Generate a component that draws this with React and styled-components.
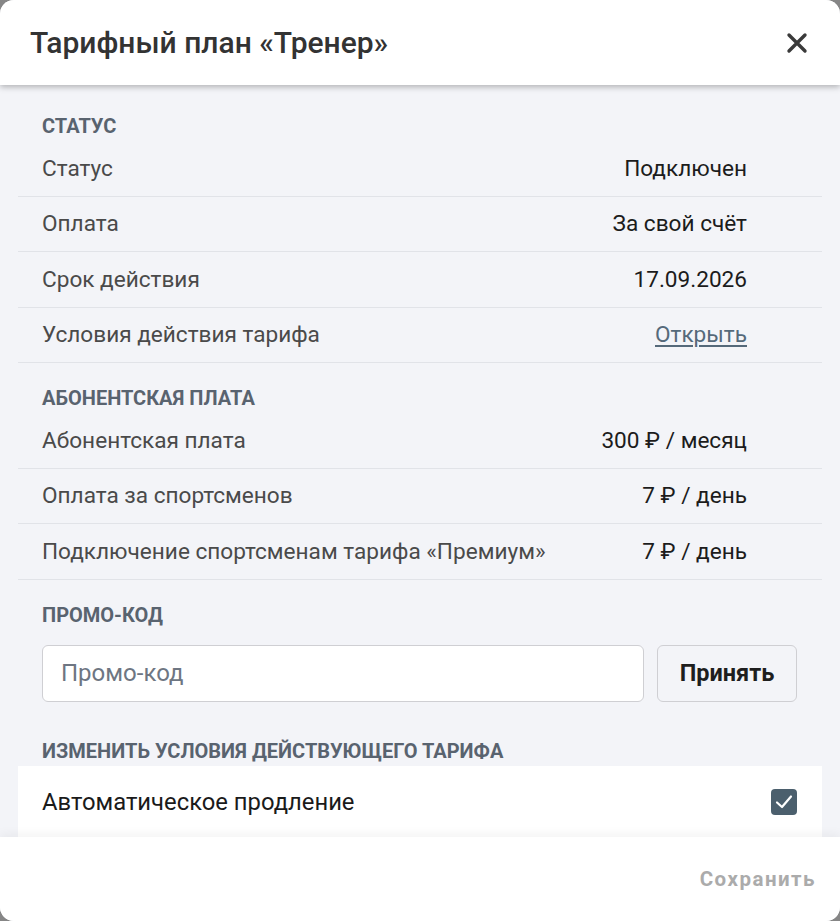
import React, { useState } from "react";
import styled, { createGlobalStyle } from "styled-components";

const GlobalStyle = createGlobalStyle`
  html, body {
    margin: 0;
    padding: 0;
    height: 100%;
    background: #868686;
  }
  body {
    font-family: Roboto, "Liberation Sans", sans-serif;
    -webkit-font-smoothing: antialiased;
  }
  #root {
    height: 100%;
  }
  * {
    box-sizing: border-box;
  }
`;

const Modal = styled.div`
  height: 921px;
  width: 840px;
  background: #f3f4f8;
  border-radius: 14px;
  overflow: hidden;
  display: flex;
  flex-direction: column;
`;

const Header = styled.div`
  height: 85px;
  flex-shrink: 0;
  background: #fff;
  display: flex;
  align-items: center;
  justify-content: space-between;
  padding: 0 28px 0 30px;
  box-shadow: 0 2px 6px rgba(0, 0, 0, 0.28);
  position: relative;
  z-index: 2;
`;

const Title = styled.h1`
  margin: 0;
  font-size: 30px;
  font-weight: 500;
  color: #333;
`;

const CloseButton = styled.button`
  background: none;
  border: none;
  padding: 4px;
  cursor: pointer;
  display: flex;
  color: #3a3a3a;
`;

const Body = styled.div`
  flex: 1;
  overflow: hidden;
  padding: 6px 18px 0;
`;

const SectionTitle = styled.div`
  padding: 25px 24px 5px;
  line-height: 20px;
  font-size: 20px;
  font-weight: 700;
  text-transform: uppercase;
  color: #59636f;
`;

const Row = styled.div`
  height: 55.5px;
  display: flex;
  align-items: center;
  justify-content: space-between;
  padding: 0 75px 0 24px;
  border-bottom: 1.5px solid #e1e3e8;
  font-size: 22.6px;
`;

const Label = styled.span`
  color: #4a4a4a;
`;

const Value = styled.span`
  color: #1c1c1c;
`;

const LinkValue = styled.a`
  color: #55697a;
  text-decoration: underline;
  text-underline-offset: 3px;
  cursor: pointer;
`;

const PromoRow = styled.div`
  display: flex;
  gap: 13px;
  padding: 15px 25px 14px 24px;
`;

const PromoInput = styled.input`
  flex: 1;
  height: 57px;
  border: 1.5px solid #cfcfd3;
  border-radius: 6px;
  background: #fff;
  padding: 0 18px;
  font-family: inherit;
  font-size: 24px;
  color: #222;
  outline: none;
  &::placeholder {
    color: #6e7682;
  }
`;

const AcceptButton = styled.button`
  width: 140px;
  height: 57px;
  border: 1.5px solid #cfcfd3;
  border-radius: 6px;
  background: #f3f4f8;
  font-family: inherit;
  font-size: 23.5px;
  font-weight: 700;
  color: #1e1e1e;
  cursor: pointer;
`;

const CheckRow = styled.label`
  height: 72px;
  background: #fff;
  display: flex;
  align-items: center;
  justify-content: space-between;
  padding: 0 25px 0 24px;
  font-size: 23.8px;
  color: #1a1a1a;
  cursor: pointer;
`;

const CheckBox = styled.span`
  width: 26px;
  height: 26px;
  border-radius: 4px;
  background: ${({ checked }) => (checked ? "#4b5f6d" : "#fff")};
  border: ${({ checked }) => (checked ? "none" : "2px solid #8a96a0")};
  display: flex;
  align-items: center;
  justify-content: center;
`;

const Footer = styled.div`
  height: 84px;
  flex-shrink: 0;
  background: #fff;
  display: flex;
  align-items: center;
  justify-content: flex-end;
  padding: 0 24px;
  box-shadow: 0 -3px 10px rgba(0, 0, 0, 0.05);
  position: relative;
  z-index: 2;
`;

const SaveButton = styled.button`
  background: none;
  border: none;
  padding: 0;
  font-family: inherit;
  font-size: 20.5px;
  font-weight: 700;
  letter-spacing: 1.5px;
  color: #ababab;
`;

const statusRows = [
  { label: "Статус", value: "Подключен" },
  { label: "Оплата", value: "За свой счёт" },
  { label: "Срок действия", value: "17.09.2026" },
  { label: "Условия действия тарифа", link: "Открыть" },
];

const feeRows = [
  { label: "Абонентская плата", value: "300 ₽ / месяц" },
  { label: "Оплата за спортсменов", value: "7 ₽ / день" },
  { label: "Подключение спортсменам тарифа «Премиум»", value: "7 ₽ / день" },
];

function InfoRows({ rows }) {
  return rows.map(r => (
    <Row key={r.label}>
      <Label>{r.label}</Label>
      {r.link ? <LinkValue>{r.link}</LinkValue> : <Value>{r.value}</Value>}
    </Row>
  ));
}

export default function App() {
  const [promo, setPromo] = useState("");
  const [autoRenew, setAutoRenew] = useState(true);

  return (
    <>
      <GlobalStyle />
      <Modal>
        <Header>
          <Title>Тарифный план «Тренер»</Title>
          <CloseButton>
            <svg width="22" height="22" viewBox="0 0 22 22">
              <path
                d="M3 3 L19 19 M19 3 L3 19"
                stroke="currentColor"
                strokeWidth="3.4"
                strokeLinecap="round"
              />
            </svg>
          </CloseButton>
        </Header>
        <Body>
          <SectionTitle>Статус</SectionTitle>
          <InfoRows rows={statusRows} />
          <SectionTitle>Абонентская плата</SectionTitle>
          <InfoRows rows={feeRows} />
          <SectionTitle>Промо-код</SectionTitle>
          <PromoRow>
            <PromoInput
              placeholder="Промо-код"
              value={promo}
              onChange={e => setPromo(e.target.value)}
            />
            <AcceptButton>Принять</AcceptButton>
          </PromoRow>
          <SectionTitle>Изменить условия действующего тарифа</SectionTitle>
          <CheckRow onClick={() => setAutoRenew(!autoRenew)}>
            Автоматическое продление
            <CheckBox checked={autoRenew}>
              {autoRenew && (
                <svg width="22" height="22" viewBox="0 0 22 22">
                  <path
                    d="M4 11.5 L9 16 L18 5.5"
                    fill="none"
                    stroke="#fff"
                    strokeWidth="2.2"
                    strokeLinecap="round"
                    strokeLinejoin="round"
                  />
                </svg>
              )}
            </CheckBox>
          </CheckRow>
        </Body>
        <Footer>
          <SaveButton>Сохранить</SaveButton>
        </Footer>
      </Modal>
    </>
  );
}
